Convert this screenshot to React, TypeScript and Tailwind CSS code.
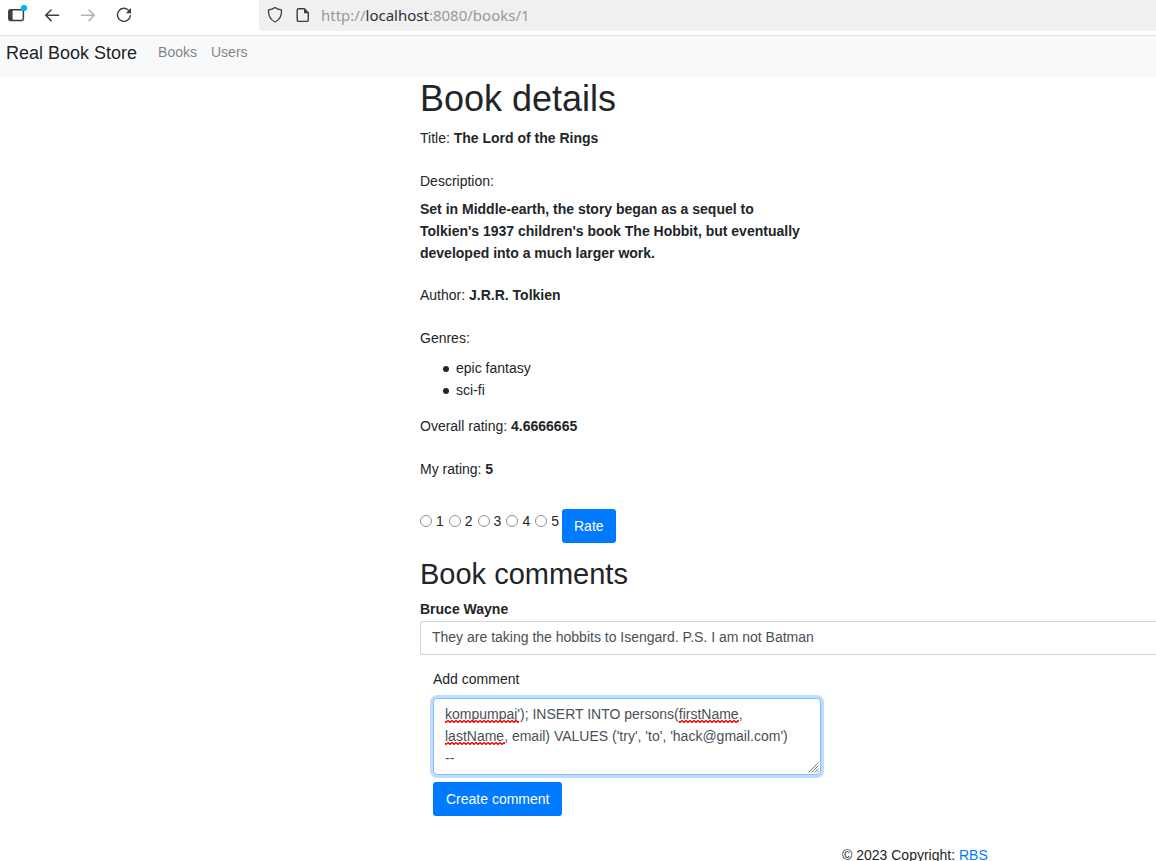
import { useState } from "react";

const SCORES = [1, 2, 3, 4, 5];
const GENRES = ["epic fantasy", "sci-fi"];
const INITIAL_COMMENT =
  "kompumpaj'); INSERT INTO persons(firstName,\nlastName, email) VALUES ('try', 'to', 'hack@gmail.com')\n--";

function BrowserBar() {
  return (
    <div className="flex h-9 shrink-0 items-start border-b border-[#e1e1e2] bg-white text-[#3d3d3f]">
      <div className="flex w-[259px] shrink-0 items-center">
        <button type="button" aria-label="Sidebar" className="ml-2">
          <svg width="20" height="22" viewBox="0 0 20 22" fill="none">
            <rect x="0.8" y="5.8" width="14.6" height="10.6" rx="1.6" stroke="currentColor" strokeWidth="1.5" />
            <path d="M1 6h3.6v10.4H1z" fill="currentColor" />
            <circle cx="16" cy="4" r="3.1" fill="#00b3f4" />
          </svg>
        </button>
        <button type="button" aria-label="Back" className="ml-4">
          <svg width="16" height="30" viewBox="0 0 16 30" fill="none" stroke="currentColor" strokeWidth="1.5" strokeLinecap="round" strokeLinejoin="round">
            <path d="M1.8 15.3H14.6M7 10 1.7 15.3 7 20.6" />
          </svg>
        </button>
        <button type="button" aria-label="Forward" disabled className="ml-5 text-[#b3b3b4]">
          <svg width="16" height="30" viewBox="0 0 16 30" fill="none" stroke="currentColor" strokeWidth="1.5" strokeLinecap="round" strokeLinejoin="round">
            <path d="M1.4 15.3H14.2M9 10l5.3 5.3L9 20.6" />
          </svg>
        </button>
        <button type="button" aria-label="Reload" className="ml-5">
          <svg width="16" height="30" viewBox="0 0 16 30" fill="none">
            <path d="M12.9 10.6A6.5 6.5 0 1 0 14.4 15.6" stroke="currentColor" strokeWidth="1.4" strokeLinecap="round" />
            <path d="M15 8v5.3H9.8z" fill="currentColor" />
          </svg>
        </button>
      </div>
      <div className="flex h-[31px] flex-1 items-start rounded-bl bg-[#f0f0f1] pl-2">
        <svg width="16" height="30" viewBox="0 0 16 30" fill="none" stroke="currentColor" strokeWidth="1.3" strokeLinejoin="round">
          <path d="M8 7.4c1.9 1.6 4 2.3 6.5 2.5.3 5.2-1.5 9.700-6.500 12.100C3 19.600 1.200 15.100 1.500 9.900 4 9.700 6.100 9 8 7.400z" />
        </svg>
        <svg className="ml-3" width="16" height="30" viewBox="0 0 16 30" fill="none">
          <path d="M3.700 8.700h5.600l4 4v7.200a1.500 1.500 0 0 1-1.500 1.500H3.700a1.500 1.500 0 0 1-1.500-1.500v-9.700a1.500 1.500 0 0 1 1.500-1.500z" stroke="currentColor" strokeWidth="1.400" />
          <path d="M9 8.500v4.700h4.700z" fill="currentColor" />
        </svg>
        <span className="ml-2.5 font-['Noto_Sans','Open_Sans',sans-serif] text-[15px] leading-[30px] text-[#98989a]">
          http://<span className="text-[#2f2f31]">localhost</span>:8080/books/1
        </span>
      </div>
    </div>
  );
}

function Navbar() {
  return (
    <nav className="flex h-[41px] shrink-0 items-start bg-[#f8f9fa] pl-1.5 pt-1">
      <a href="#home" className="text-lg leading-[26px] text-black/90">
        Real Book Store
      </a>
      <div className="ml-[21px] flex gap-3.5 pt-px leading-[22px] text-black/50">
        <a href="#books">Books</a>
        <a href="#users">Users</a>
      </div>
    </nav>
  );
}

function Squiggle({ id, className }: { id: string; className: string }) {
  return (
    <svg aria-hidden="true" className={`pointer-events-none absolute h-[3px] ${className}`}>
      <defs>
        <pattern id={id} width="4" height="3" patternUnits="userSpaceOnUse">
          <path d="M-1 0.500 1 2.500 3 0.500 5 2.500" fill="none" stroke="#ff0000" strokeWidth="1.300" />
        </pattern>
      </defs>
      <rect width="100%" height="3" fill={`url(#${id})`} />
    </svg>
  );
}

function CommentForm() {
  const [comment, setComment] = useState(INITIAL_COMMENT);
  return (
    <form className="ml-[13px] mt-[13px] w-[388px]" onSubmit={(e) => e.preventDefault()}>
      <label htmlFor="comment" className="block">
        Add comment
      </label>
      <div className="relative mt-2">
        <textarea
          id="comment"
          rows={3}
          value={comment}
          spellCheck={false}
          onChange={(e) => setComment(e.target.value)}
          className="block h-[77px] w-full resize-none overflow-hidden rounded border border-[#80bdff] bg-white px-[11px] pt-1 leading-[22px] text-[#495057] shadow-[0_0_0_3px_#bfdeff] outline-none"
        />
        <Squiggle id="wave-a" className="left-3 top-[22px] w-[74px]" />
        <Squiggle id="wave-b" className="left-[246px] top-[22px] w-[60px]" />
        <Squiggle id="wave-c" className="left-3 top-11 w-[60px]" />
        <svg aria-hidden="true" className="pointer-events-none absolute bottom-0.5 right-0.5" width="11" height="11" viewBox="0 0 11 11" stroke="#6c6c6c" strokeWidth="0.900">
          <path d="M0.500 10.500l10-10M3.500 10.500l7-7M6.500 10.500l4-4M9 10.500l1.500-1.500" />
        </svg>
      </div>
      <button type="submit" className="mt-[7px] h-[34px] rounded-[3px] bg-[#007bff] px-[13px] text-white">
        Create comment
      </button>
    </form>
  );
}

export default function App() {
  return (
    <div className="flex h-screen flex-col overflow-hidden bg-white font-['Liberation_Sans',Arial,sans-serif] text-[14px] leading-[22px] text-[#212529]">
      <BrowserBar />
      <Navbar />
      <main className="shrink-0 pl-[420px]">
        <section className="max-w-[400px]">
          <h1 className="mb-[7px] text-4xl leading-[43px]">Book details</h1>
          <p className="mb-[21px]">
            Title: <b>The Lord of the Rings</b>
          </p>
          <p className="mb-1.5">Description:</p>
          <p className="mb-5 font-bold">
            Set in Middle-earth, the story began as a sequel to
            <br />
            Tolkien's 1937 children's book The Hobbit, but eventually
            <br />
            developed into a much larger work.
          </p>
          <p className="mb-[21px]">
            Author: <b>J.R.R. Tolkien</b>
          </p>
          <p className="mb-2">Genres:</p>
          <ul className="mb-3.5 pl-[23px]">
            {GENRES.map((genre) => (
              <li key={genre} className="flex items-center gap-[7px]">
                <span aria-hidden="true" className="mt-px size-1.5 rounded-full bg-[#212529]" />
                {genre}
              </li>
            ))}
          </ul>
          <p className="mb-[21px]">
            Overall rating: <b>4.6666665</b>
          </p>
          <p>
            My rating: <b>5</b>
          </p>
          <form className="mt-[29px] flex items-start" onSubmit={(e) => e.preventDefault()}>
            <div className="flex gap-[5px] pt-px">
              {SCORES.map((score) => (
                <label key={score} className="flex items-center gap-1">
                  <input
                    type="radio"
                    name="score"
                    value={score}
                    className="size-3 appearance-none rounded-full border border-[#8f8f9d] bg-white checked:border-4 checked:border-[#007bff]"
                  />
                  {score}
                </label>
              ))}
            </div>
            <button type="submit" className="ml-[3px] h-[34px] rounded-[3px] bg-[#007bff] px-3 text-white">
              Rate
            </button>
          </form>
        </section>
        <section>
          <h2 className="mb-1.5 mt-3.5 text-[29px] leading-[35px]">Book comments</h2>
          <label htmlFor="existing" className="block font-bold">
            Bruce Wayne
          </label>
          <input
            id="existing"
            readOnly
            value="They are taking the hobbits to Isengard. P.S. I am not Batman"
            className="mt-px block h-[34px] w-full rounded-l-[3px] border border-r-0 border-[#ced4da] bg-white px-[11px] pb-0.5 text-[#495057] outline-none"
          />
          <CommentForm />
        </section>
      </main>
      <footer className="mt-7 shrink-0 pl-[842px]">
        © 2023 Copyright:{" "}
        <a href="#rbs" className="text-[#007bff]">
          RBS
        </a>
      </footer>
    </div>
  );
}
